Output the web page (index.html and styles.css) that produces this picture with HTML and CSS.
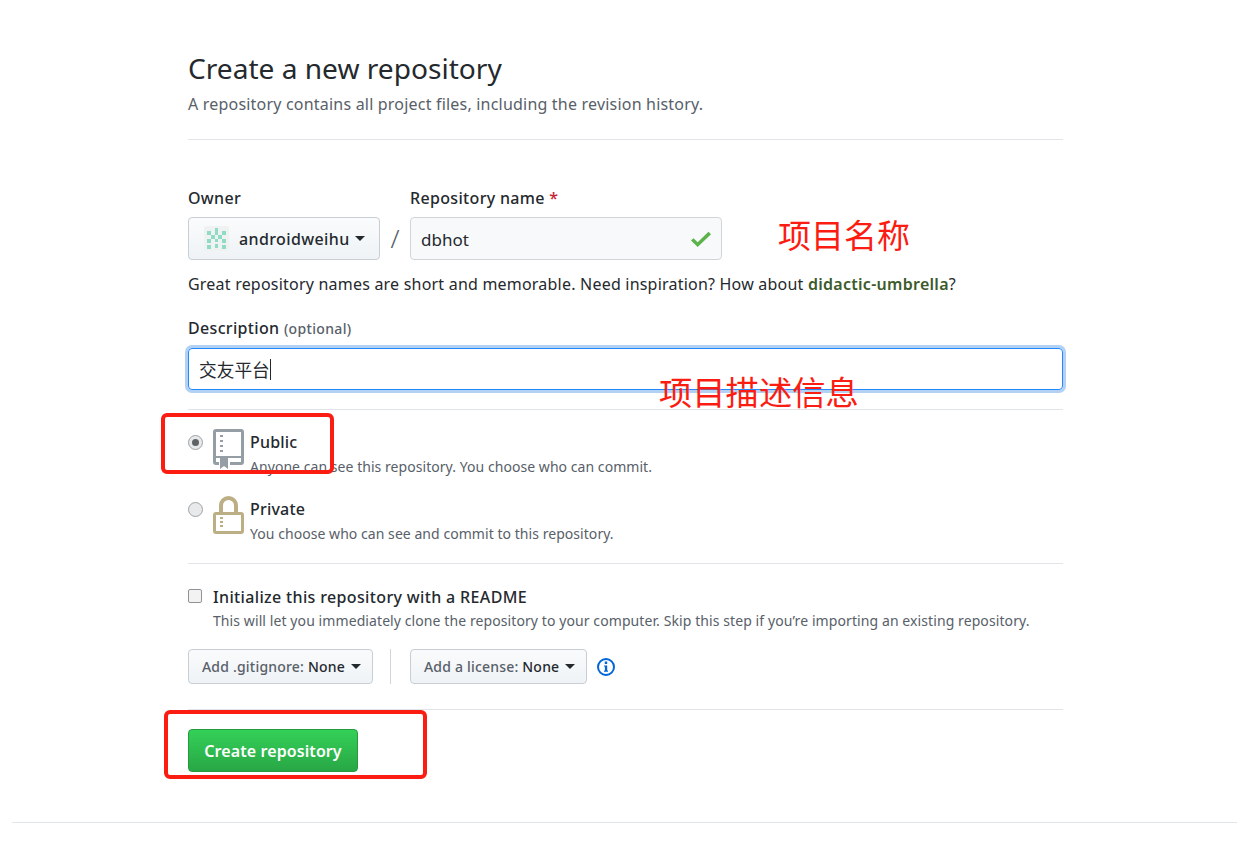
FILE: index.html
```html
<!DOCTYPE html>
<html lang="zh">
<head>
<meta charset="utf-8">
<title>Create a new repository</title>
<link rel="stylesheet" href="styles.css">
</head>
<body>
<main class="page">
  <header class="head">
    <h1 class="title">Create a new repository</h1>
    <p class="subtitle">A repository contains all project files, including the revision history.</p>
  </header>

  <section class="name-row">
    <div class="field">
      <div class="label">Owner</div>
      <div class="btn owner">
        <svg class="avatar" width="25" height="25" viewBox="0 0 25 25" shape-rendering="crispEdges"><rect width="25" height="25" fill="#f0f2f1"/><path fill="#8fdcc4" d="M11 2h3v4h-3zM3 5h4v4H3zM18 5h4v4h-4zM7 9h4v4H7zM14 9h4v4h-4zM11 6h3v3h-3zM11 13h3v3h-3zM3 13h4v4H3zM18 13h4v4h-4zM3 19h4v4H3zM11 18h3v4h-3zM18 19h4v4h-4z"/></svg>
        <span class="owner-name">androidweihu</span>
        <span class="caret"></span>
      </div>
    </div>
    <div class="slash">/</div>
    <div class="field">
      <div class="label">Repository name <span class="req">*</span></div>
      <div class="input repo">
        <span class="repo-text">dbhot</span>
        <svg width="20" height="16" viewBox="0 3 12 10" preserveAspectRatio="none"><path fill="#5cb34a" d="M12 5l-8 8-4-4 1.500-1.500L4 10l6.500-6.500z"/></svg>
      </div>
    </div>
    <div class="note note-name">项目名称</div>
  </section>

  <p class="hint">Great repository names are short and memorable. Need inspiration? How about <strong class="suggest">didactic-umbrella</strong>?</p>

  <div class="label desc-label">Description <span class="optional">(optional)</span></div>
  <div class="input desc"><span>交友平台</span><i class="cursor"></i></div>
  <div class="note note-desc">项目描述信息</div>

  <hr class="rule rule-a">

  <div class="choice">
    <span class="radio on"></span>
    <svg class="big-icon" width="31" height="40" viewBox="0 0 31 40"><path fill="#959da5" fill-rule="evenodd" d="M3 0h25a3 3 0 0 1 3 3v30a3 3 0 0 1-3 3H3a3 3 0 0 1-3-3V3a3 3 0 0 1 3-3zm0 3v24h25V3zm0 26v4h25v-4z"/><path fill="#fff" d="M6 29h11v7H6z"/><path fill="#959da5" d="M7 29h8v11l-4-3-4 3zM7 6h3v2H7zM7 11h3v2H7zM7 16h3v2H7zM7 21h3v2H7z"/></svg>
    <div class="choice-text">
      <div class="choice-title">Public</div>
      <div class="choice-sub">Anyone can see this repository. You choose who can commit.</div>
    </div>
  </div>
  <div class="choice choice-private">
    <span class="radio"></span>
    <svg class="big-icon" width="31" height="38" viewBox="0 0 31 38"><path fill="#bcaf85" fill-rule="evenodd" d="M6 16V9.500a9.500 9.500 0 0 1 19 0V16h3a3 3 0 0 1 3 3v16a3 3 0 0 1-3 3H3a3 3 0 0 1-3-3V19a3 3 0 0 1 3-3zm4 0h11V9.500a5.500 5.500 0 0 0-11 0zM3 19v16h25V19z"/><path fill="#bcaf85" d="M7 21h3v2H7zM7 25h3v2H7zM7 29h3v2H7z"/></svg>
    <div class="choice-text">
      <div class="choice-title">Private</div>
      <div class="choice-sub">You choose who can see and commit to this repository.</div>
    </div>
  </div>

  <hr class="rule rule-b">

  <div class="readme">
    <span class="check"></span>
    <div>
      <div class="choice-title title-wide">Initialize this repository with a README</div>
      <div class="choice-sub sub-wide">This will let you immediately clone the repository to your computer. Skip this step if you’re importing an existing repository.</div>
    </div>
  </div>

  <div class="addons">
    <div class="btn small"><span class="muted">Add .gitignore:</span>&nbsp;None<span class="caret"></span></div>
    <div class="vrule"></div>
    <div class="btn small"><span class="muted">Add a license:</span>&nbsp;None<span class="caret"></span></div>
    <svg class="info" width="20" height="20" viewBox="0 0 20 20"><circle cx="10" cy="10" r="8" fill="none" stroke="#0366d6" stroke-width="2"/><path fill="#0366d6" d="M8.800 4.600h2.400v2.300H8.800zM8 8.400h3.200v5.200H12v1.200H8v-1.200h.9V9.600H8z"/></svg>
  </div>

  <hr class="rule rule-c">

  <div class="create">Create repository</div>

  <div class="mark mark-public"></div>
  <div class="mark mark-create"></div>
</main>
<div class="footer-line"></div>
</body>
</html>
```

FILE: styles.css
```css
html, body { margin: 0; padding: 0; background: #fff; }
body {
  height: 841px;
  overflow: hidden;
  color: #24292e;
  font-family: "Noto Sans", "Noto Sans CJK SC", sans-serif;
  font-size: 16px;
}
.page { position: relative; width: 875px; margin-left: 188px; height: 822px; padding-top: 48px; box-sizing: border-box; }
.head { height: 91px; border-bottom: 1px solid #e1e4e8; }
.title { margin: 0; font-size: 28.1px; font-weight: 400; line-height: 40px; }
.subtitle { margin: 1px 0 0; font-size: 16px; line-height: 30px; color: #586069; letter-spacing: 0.2px; }

.name-row { display: flex; align-items: flex-end; margin-top: 46px; }
.label { font-size: 16px; font-weight: 500; line-height: 24px; margin-bottom: 7px; letter-spacing: 0.33px; }
.req { color: #cb2431; }
.btn {
  display: flex; align-items: center; box-sizing: border-box;
  border: 1px solid #c9ced4; border-radius: 4px;
  background: linear-gradient(#fafbfc, #eff3f6);
  font-weight: 500;
}
.owner { width: 192px; height: 43px; padding-left: 15px; }
.avatar { border-radius: 2px; }
.owner-name { margin-left: 10px; padding-top: 1px; font-size: 16px; letter-spacing: 0.38px; }
.caret { display: inline-block; width: 0; height: 0; margin-left: 5px; border: 5px solid transparent; border-top-color: #24292e; border-bottom: 0; }
.slash { width: 30px; height: 43px; text-align: center; font-size: 26px; line-height: 43px; color: #586069; font-weight: 300; }
.input {
  box-sizing: border-box; display: flex; align-items: center;
  border: 1px solid #d1d5da; border-radius: 4px; font-size: 17px;
}
.repo { width: 312px; height: 43px; padding: 0 10px; background: #f8f9fa; justify-content: space-between; }
.repo-text { padding-top: 1px; }
.note { position: absolute; color: #fb1c12; font-family: "Noto Sans CJK SC", sans-serif; font-size: 33px; line-height: 44px; }
.note-name { left: 590px; top: 212px; }
.note-desc { left: 471px; top: 369px; font-size: 33.3px; }

.hint { margin: 12px 0 0; font-size: 16px; line-height: 24px; letter-spacing: 0.21px; }
.suggest { color: #3d5a2b; font-weight: 600; letter-spacing: 0.28px; }
.desc-label { margin: 20px 0 7px; }
.optional { font-size: 14px; color: #586069; }
.desc {
  width: 875px; height: 42px; padding: 0 10px;
  border-color: #2188ff;
  box-shadow: 0 0 0 3px rgba(3, 102, 214, 0.3);
  font-family: "Noto Sans CJK SC", sans-serif; font-size: 17.7px;
}
.cursor { display: block; width: 1px; height: 21px; background: #24292e; }

.rule { margin: 0; border: 0; height: 1px; background: #e1e4e8; }
.rule-a { margin-top: 19px; }
.choice { display: flex; margin-top: 19px; height: 47px; }
.choice-private { margin-top: 20px; }
.radio {
  box-sizing: border-box; flex: none; width: 15px; height: 15px; margin: 6px 10px 0 0;
  border: 1px solid #9fa3a7; border-radius: 50%; background: #e8e9ea; position: relative;
}
.radio.on::after { content: ""; position: absolute; left: 3px; top: 3px; width: 7px; height: 7px; border-radius: 50%; background: #5f6366; }
.big-icon { flex: none; margin-right: 6px; }
.choice-title { font-size: 16px; font-weight: 500; line-height: 24px; letter-spacing: 0.2px; }
.title-wide { letter-spacing: 0.35px; }
.choice-sub { margin-top: 1px; font-size: 14px; line-height: 24px; color: #586069; letter-spacing: 0.05px; }
.sub-wide { margin-top: 0; letter-spacing: 0.09px; }
.choice-text { margin-top: 1px; }

.rule-b { margin-top: 20px; }
.readme { display: flex; margin-top: 21px; }
.check { box-sizing: border-box; flex: none; width: 14px; height: 14px; margin: 4px 11px 0 0; border: 1px solid #8f9397; border-radius: 2px; background: #f2f2f2; }

.addons { display: flex; align-items: center; margin-top: 16px; }
.small { height: 35px; padding: 0 11px 0 13px; font-size: 14px; letter-spacing: 0.2px; }
.small .caret { margin-left: 6px; }
.muted { color: #586069; }
.vrule { width: 1px; height: 35px; background: #d1d5da; margin: 0 19px 0 17px; }
.info { margin-left: 9px; }
.rule-c { margin-top: 25px; }
.create {
  display: flex; align-items: center; justify-content: center;
  width: 170px; height: 43px; margin-top: 19px; box-sizing: border-box;
  border: 1px solid #259a3f; border-radius: 4px;
  background: linear-gradient(#34d058, #28a745);
  color: #fff; font-weight: 600; font-size: 16px; letter-spacing: 0.09px;
}
.mark { position: absolute; box-sizing: border-box; border: 4px solid #fb1c12; border-radius: 6px; }
.mark-public { left: -27px; top: 413px; width: 173px; height: 61px; }
.mark-create { left: -24px; top: 710px; width: 263px; height: 69px; }
.footer-line { height: 1px; margin: 0 8px 0 12px; background: #e1e4e8; }
```
